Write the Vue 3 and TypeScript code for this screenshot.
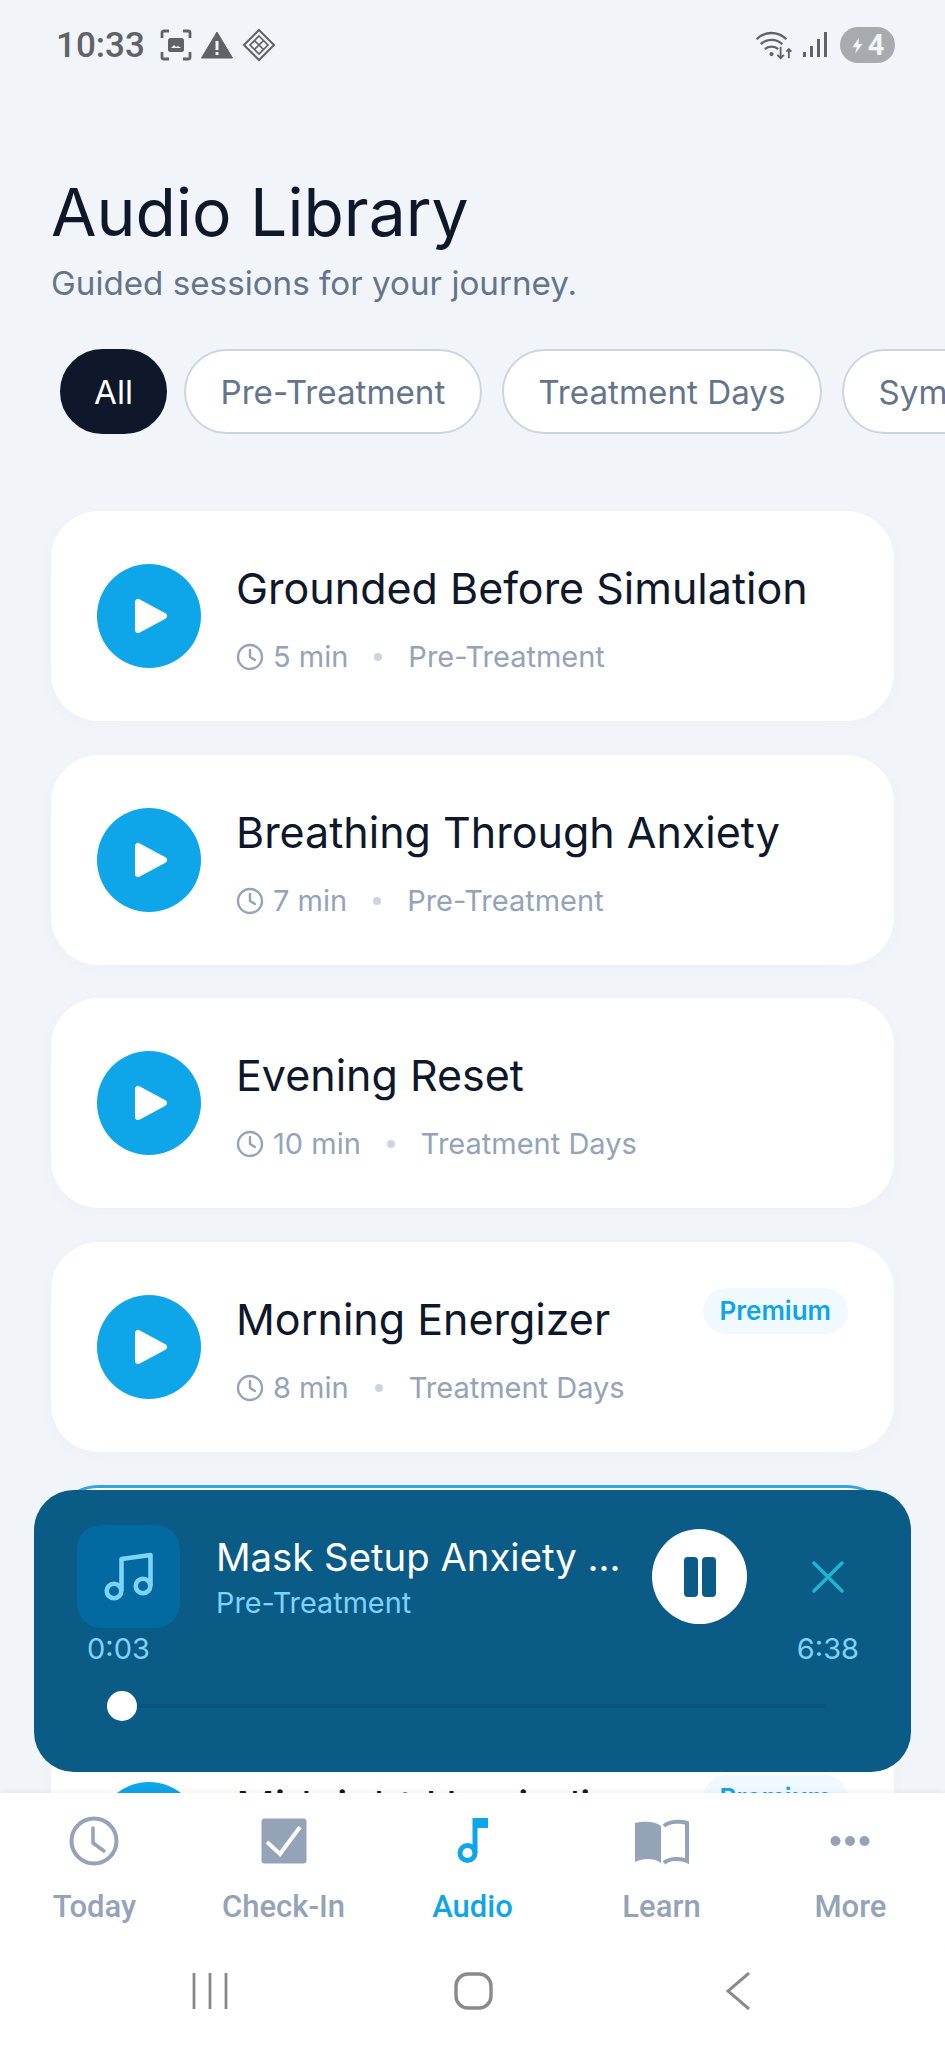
<template>
  <div class="screen">
    <div class="status">
      <div class="status-left">
        <span class="clock">10:33</span>
        <svg width="32" height="32" viewBox="0 0 32 32" fill="none" stroke="#5f6368" stroke-width="2.800">
          <path d="M2 9V4a2 2 0 0 1 2-2h5M23 2h5a2 2 0 0 1 2 2v5M30 23v5a2 2 0 0 1-2 2h-5M9 30H4a2 2 0 0 1-2-2v-5" />
          <rect x="8" y="9" width="16" height="14" rx="2.500" fill="#5f6368" stroke="none" />
          <path d="M11 19l3-3 2 2 2-1 3 2Z" fill="#f1f5f9" stroke="none" />
        </svg>
        <svg width="32" height="28" viewBox="0 0 32 28">
          <path d="M16 1 31.500 27H.5Z" fill="#5f6368" stroke="#5f6368" stroke-linejoin="round" />
          <rect x="14.500" y="10" width="3" height="9" fill="#f1f5f9" />
          <rect x="14.500" y="21" width="3" height="3" fill="#f1f5f9" />
        </svg>
        <svg width="34" height="34" viewBox="0 0 34 34" fill="none" stroke="#5f6368" stroke-width="2">
          <path d="M17 2 32 17 17 32 2 17Z" />
          <path d="M17 8 26 17 17 26 8 17ZM12.500 12.500 21.500 21.500M21.500 12.500 12.500 21.500" stroke-width="1.700" />
        </svg>
      </div>
      <div class="status-right">
        <svg width="38" height="30" viewBox="0 0 46 36" fill="none" stroke="#5f6368" stroke-width="2.800">
          <path d="M2 11C12 1 28 1 38 11M7 17C14 10 26 10 33 17M12 23C16 19 24 19 28 23" />
          <circle cx="20" cy="29" r="2.500" fill="#5f6368" stroke="none" />
          <path d="M31 20V34M27 30l4 4 4-4M41 34V23M38 26l3-3 3 3" stroke-width="2.200" />
        </svg>
        <svg width="24" height="26" viewBox="0 0 24 26" fill="#5f6368">
          <rect x="0" y="20" width="3" height="5" />
          <rect x="7" y="14" width="3" height="11" />
          <rect x="14" y="7" width="3" height="18" />
          <rect x="21" y="0" width="3" height="25" />
        </svg>
        <div class="battery">
          <svg width="13" height="19" viewBox="0 0 16 22" fill="#f1f5f9"><path d="M10 1 2 13h5l-2 8 9-12H9Z" /></svg>
          <span>4</span>
        </div>
      </div>
    </div>

    <div class="content">
      <h1>Audio Library</h1>
      <p class="sub">Guided sessions for your journey.</p>

      <div class="chips">
        <span v-for="c in chips" :key="c" class="chip" :class="{ active: c === 'All' }">{{ c }}</span>
      </div>

      <div class="list">
        <div v-for="t in tracks" :key="t.title" class="card" :class="{ playing: t.playing }">
          <div class="play">
            <svg width="36" height="38" viewBox="0 0 36 38"><path d="M5 5V33L31 19Z" fill="#fff" stroke="#fff" stroke-width="6" stroke-linejoin="round" /></svg>
          </div>
          <div class="info">
            <div class="title">{{ t.title }}</div>
            <div class="meta">
              <svg width="28" height="28" viewBox="0 0 28 28" fill="none" stroke="#94a3b8" stroke-width="2.400" stroke-linecap="round" stroke-linejoin="round">
                <circle cx="14" cy="14" r="12" />
                <path d="M14 7v7l5 3" />
              </svg>
              <span class="dur">{{ t.mins }} min</span>
              <span class="dot"></span>
              <span>{{ t.cat }}</span>
            </div>
          </div>
          <span v-if="t.premium" class="badge">Premium</span>
        </div>
      </div>

      <div class="player">
        <div class="player-top">
          <div class="art">
            <svg width="56" height="56" viewBox="0 0 56 56" fill="none" stroke="#7dd3fc" stroke-width="4.600" stroke-linejoin="round">
              <path d="M20.500 42V10L49.500 6V37" />
              <circle cx="13" cy="42" r="7.300" />
              <circle cx="42" cy="37" r="7.300" />
            </svg>
          </div>
          <div class="now">
            <div class="now-title">Mask Setup Anxiety ...</div>
            <div class="now-cat">Pre-Treatment</div>
          </div>
          <div class="pause">
            <span></span>
            <span></span>
          </div>
          <svg class="close" width="32" height="32" viewBox="0 0 32 32" stroke="#1fb6d4" stroke-width="3.400" stroke-linecap="round">
            <path d="M2 2 30 30M30 2 2 30" />
          </svg>
        </div>
        <div class="times">
          <span>0:03</span>
          <span>6:38</span>
        </div>
        <div class="track">
          <span class="thumb"></span>
        </div>
      </div>
    </div>

    <div class="nav">
      <div v-for="n in nav" :key="n.label" class="tab" :class="{ on: n.label === 'Audio' }">
        <svg width="56" height="56" viewBox="0 0 56 56">
          <g v-if="n.label === 'Today'" fill="none" stroke="#94a3b8" stroke-width="4" stroke-linecap="round" stroke-linejoin="round">
            <circle cx="28" cy="28" r="22.500" />
            <path d="M27 15v15l11 8" stroke-width="3.500" />
          </g>
          <g v-else-if="n.label === 'Check-In'">
            <rect x="5.500" y="5.500" width="45" height="45" rx="3" fill="#94a3b8" />
            <path d="M11 29 24 41 44 14" fill="none" stroke="#fff" stroke-width="4" />
          </g>
          <g v-else-if="n.label === 'Audio'" fill="#0ea5e9">
            <path d="M27.500 5H43V15H32.500V40H27.500Z" />
            <circle cx="22.500" cy="40" r="7.500" fill="none" stroke="#0ea5e9" stroke-width="5" />
          </g>
          <g v-else-if="n.label === 'Learn'">
            <path d="M27 13C21 8 9 8 1 10V49C9 45 21 45 27 50Z" fill="#94a3b8" />
            <path d="M30 13C35 8 47 8 53 10V48C47 45 35 45 30 50" fill="none" stroke="#94a3b8" stroke-width="4" />
          </g>
          <g v-else fill="#94a3b8">
            <circle cx="13.500" cy="28" r="5" />
            <circle cx="28" cy="28" r="5" />
            <circle cx="42.500" cy="28" r="5" />
          </g>
        </svg>
        <span>{{ n.label }}</span>
      </div>
    </div>

    <div class="sysbar">
      <svg width="36" height="38" viewBox="0 0 36 38" stroke="#8a8a8a" stroke-width="2.800"><path d="M2 1v36M18 1v36M34 1v36" /></svg>
      <svg width="39" height="38" viewBox="0 0 39 38" fill="none" stroke="#8a8a8a" stroke-width="3.400"><rect x="2" y="2" width="35" height="34" rx="12" /></svg>
      <svg class="back" width="24" height="38" viewBox="0 0 24 38" fill="none" stroke="#8a8a8a" stroke-width="3"><path d="M23 1 2 19l21 18" /></svg>
    </div>
  </div>
</template>

<script setup lang="ts">
interface Track {
  title: string;
  mins: number;
  cat: string;
  premium?: boolean;
  playing?: boolean;
}

const chips = ['All', 'Pre-Treatment', 'Treatment Days', 'Symptoms'];

const tracks: Track[] = [
  { title: 'Grounded Before Simulation', mins: 5, cat: 'Pre-Treatment' },
  { title: 'Breathing Through Anxiety', mins: 7, cat: 'Pre-Treatment' },
  { title: 'Evening Reset', mins: 10, cat: 'Treatment Days' },
  { title: 'Morning Energizer', mins: 8, cat: 'Treatment Days', premium: true },
  { title: 'Mask Setup Anxiety Relief', mins: 6, cat: 'Pre-Treatment', playing: true },
  { title: 'Midnight Unwinding', mins: 12, cat: 'Treatment Days', premium: true },
];

const nav = [{ label: 'Today' }, { label: 'Check-In' }, { label: 'Audio' }, { label: 'Learn' }, { label: 'More' }];
</script>

<style>
html,
body {
  margin: 0;
  background: #f1f5f9;
}
</style>

<style scoped>
.screen {
  width: 945px;
  height: 2048px;
  display: flex;
  flex-direction: column;
  overflow: hidden;
  background: #f1f5f9;
  font-family: Inter, 'Noto Sans', sans-serif;
}

.status {
  height: 90px;
  padding: 0 50px 0 56px;
  flex: none;
  display: flex;
  align-items: center;
  justify-content: space-between;
  box-sizing: border-box;
}
.status-left,
.status-right {
  display: flex;
  align-items: center;
}
.status-left {
  gap: 9px;
}
.status-right {
  gap: 10px;
}
.clock {
  font-family: Roboto, sans-serif;
  font-size: 35px;
  font-weight: 500;
  color: #5f6368;
  margin-right: 6px;
}
.battery {
  width: 55px;
  height: 36px;
  margin-left: 3px;
  border-radius: 18px;
  background: #a8abae;
  color: #f1f5f9;
  display: flex;
  align-items: center;
  justify-content: center;
  gap: 4px;
  font: 700 29px Roboto, sans-serif;
}

.content {
  position: relative;
  flex: 1;
  min-height: 0;
  padding: 82px 0 0 51px;
  overflow: hidden;
}
h1 {
  margin: 0;
  font-size: 66px;
  line-height: 80px;
  font-weight: 400;
  color: #0f172a;
}
.sub {
  margin: 10px 0 0;
  font-size: 33.200px;
  line-height: 42px;
  color: #64748b;
}

.chips {
  display: flex;
  gap: 20px;
  margin: 45px 0 0 9px;
  white-space: nowrap;
}
.chip {
  height: 85px;
  padding: 0 34.500px;
  flex: none;
  box-sizing: border-box;
  border: 2.500px solid #cbd5e1;
  border-radius: 43px;
  background: #fff;
  display: flex;
  align-items: center;
  font-size: 33.200px;
  color: #64748b;
}
.chip.active {
  padding: 0 32px;
  margin-right: -3px;
  background: #0f172a;
  border-color: #0f172a;
  color: #fff;
}

.list {
  width: 843px;
  margin-top: 77px;
  display: flex;
  flex-direction: column;
  gap: 33.500px;
}
.card {
  height: 210px;
  padding: 0 46px;
  flex: none;
  box-sizing: border-box;
  background: #fff;
  border-radius: 48px;
  display: flex;
  align-items: center;
  gap: 35px;
  box-shadow: 0 4px 20px rgba(15, 23, 42, 0.02);
}
.card.playing {
  border: 3px solid #38a3d8;
}
.play {
  width: 104px;
  height: 104px;
  flex: none;
  border-radius: 50%;
  background: #0ea5e9;
  display: flex;
  align-items: center;
  justify-content: center;
  padding-left: 4px;
  box-sizing: border-box;
}
.info {
  flex: 1;
  min-width: 0;
  padding-top: 7px;
}
.title {
  font-size: 43px;
  line-height: 52px;
  color: #0f172a;
  white-space: nowrap;
}
.meta {
  margin-top: 23px;
  display: flex;
  align-items: center;
  font-size: 29px;
  line-height: 40px;
  color: #94a3b8;
}
.dur {
  margin-left: 9px;
}
.dot {
  width: 8px;
  height: 8px;
  margin: 0 26px;
  border-radius: 50%;
  background: #cbd5e1;
}
.badge {
  align-self: flex-start;
  margin-top: 46px;
  padding: 0 17px;
  height: 46px;
  border-radius: 23px;
  background: #f0f9ff;
  color: #0ea5e9;
  font-size: 26px;
  font-weight: 600;
  line-height: 46px;
}

.player {
  position: absolute;
  left: 34px;
  top: 1400px;
  width: 877px;
  height: 282px;
  box-sizing: border-box;
  padding: 35px 44px 0 43px;
  border-radius: 40px;
  background: #0a5b85;
}
.player-top {
  display: flex;
  align-items: center;
}
.art {
  width: 103px;
  height: 103px;
  flex: none;
  border-radius: 24px;
  background: #0369a1;
  display: flex;
  align-items: center;
  justify-content: center;
}
.now {
  flex: 1;
  min-width: 0;
  margin-left: 36px;
  padding-top: 2px;
}
.now-title {
  font-size: 38.300px;
  line-height: 46px;
  color: #fff;
  white-space: nowrap;
}
.now-cat {
  margin-top: 5px;
  font-size: 28.800px;
  line-height: 36px;
  color: #7dd3fc;
}
.pause {
  width: 95px;
  height: 95px;
  flex: none;
  border-radius: 50%;
  background: #fff;
  display: flex;
  align-items: center;
  justify-content: center;
  gap: 4px;
}
.pause span {
  width: 14px;
  height: 40px;
  border-radius: 4px;
  background: #0a5b85;
}
.close {
  margin: 0 23px 0 65px;
  flex: none;
}
.times {
  display: flex;
  justify-content: space-between;
  margin-top: 3px;
  padding: 0 8px 0 10px;
  font-size: 29px;
  line-height: 36px;
  color: #7dd3fc;
}
.track {
  position: relative;
  height: 4px;
  margin: 37px 41px 0 30px;
  background: #0a5580;
}
.thumb {
  position: absolute;
  left: 0;
  top: -13px;
  width: 30px;
  height: 30px;
  border-radius: 50%;
  background: #fff;
}

.nav {
  position: relative;
  height: 155px;
  flex: none;
  padding-top: 20px;
  box-sizing: border-box;
  background: #fff;
  display: grid;
  grid-template-columns: repeat(5, 1fr);
  justify-items: center;
  box-shadow: 0 -2px 6px rgba(15, 23, 42, 0.05);
}
.tab {
  display: flex;
  flex-direction: column;
  align-items: center;
  gap: 19px;
  font: 500 31px Roboto, sans-serif;
  color: #94a3b8;
}
.tab.on {
  color: #0ea5e9;
}
.sysbar {
  height: 100px;
  padding: 0 0 14px 192px;
  flex: none;
  box-sizing: border-box;
  background: #fff;
  display: flex;
  align-items: center;
  gap: 226px;
}
.back {
  margin-left: 7px;
}
</style>
